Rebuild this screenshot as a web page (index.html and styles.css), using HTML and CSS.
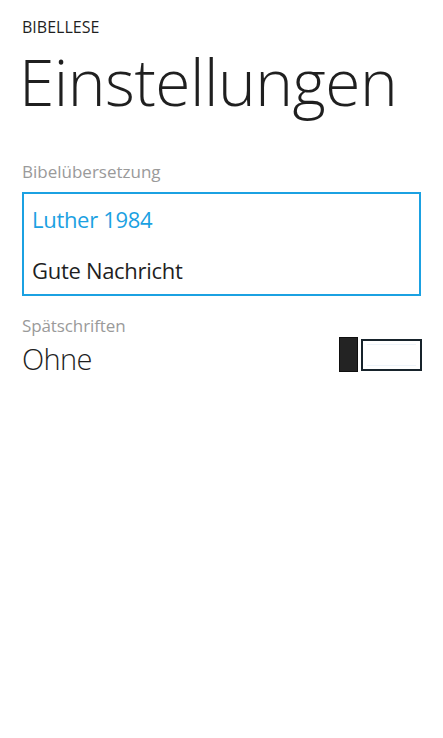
FILE: index.html
```html
<!DOCTYPE html>
<html lang="de">
<head>
<meta charset="utf-8">
<link rel="stylesheet" href="styles.css">
</head>
<body>
<div class="page">
  <div class="app-title">BIBELLESE</div>
  <h1 class="page-title">Einstellungen</h1>
  <div class="field">
    <div class="label">Bibelübersetzung</div>
    <div class="listbox">
      <div class="item selected">Luther 1984</div>
      <div class="item">Gute Nachricht</div>
    </div>
  </div>
  <div class="toggle-row">
    <div class="toggle-text">
      <div class="label small">Spätschriften</div>
      <div class="value">Ohne</div>
    </div>
    <div class="toggle">
      <div class="thumb"></div>
      <div class="track"><div class="track-inner"></div></div>
    </div>
  </div>
</div>
</body>
</html>
```
FILE: styles.css
```css
* { box-sizing: border-box; }
html, body { margin: 0; padding: 0; background: #fff; }
body { font-family: "Open Sans", "Noto Sans", sans-serif; color: #1f1f1f; }
.page { padding: 15px 22px 0 22px; }
.app-title { font-size: 16px; line-height: 24px; }
.page-title { margin: 0 0 0 -3px; font-weight: 300; font-size: 64px; line-height: 86px; letter-spacing: -0.5px; }
.field { margin-top: 35px; }
.label { color: #9a9a9a; font-size: 17px; line-height: 24px; }
.listbox { margin-top: 8px; border: 2.5px solid #1ba1e2; height: 104px; padding: 9px 8px 0 8px; display: flex; flex-direction: column; gap: 19px; }
.item { font-size: 22px; line-height: 32px; letter-spacing: -0.3px; }
.item.selected { color: #1ba1e2; }
.toggle-row { display: flex; justify-content: space-between; align-items: flex-start; margin-top: 19px; }
.label.small { font-size: 17px; line-height: 22px; letter-spacing: -0.1px; }
.value { margin-top: 2px; font-size: 29px; font-weight: 300; line-height: 40px; letter-spacing: -0.6px; }
.toggle { display: flex; align-items: center; margin-top: 22px; gap: 3px; margin-right: -1px; }
.thumb { width: 19px; height: 35px; background: #232323; border: 1px solid #0f0f0f; }
.track { width: 61px; height: 32px; border: 2px solid #17232b; padding: 3px 4px; }
.track-inner { height: 100%; border-top: 1px solid #eef4fa; border-bottom: 1px solid #eef4fa; }
```
